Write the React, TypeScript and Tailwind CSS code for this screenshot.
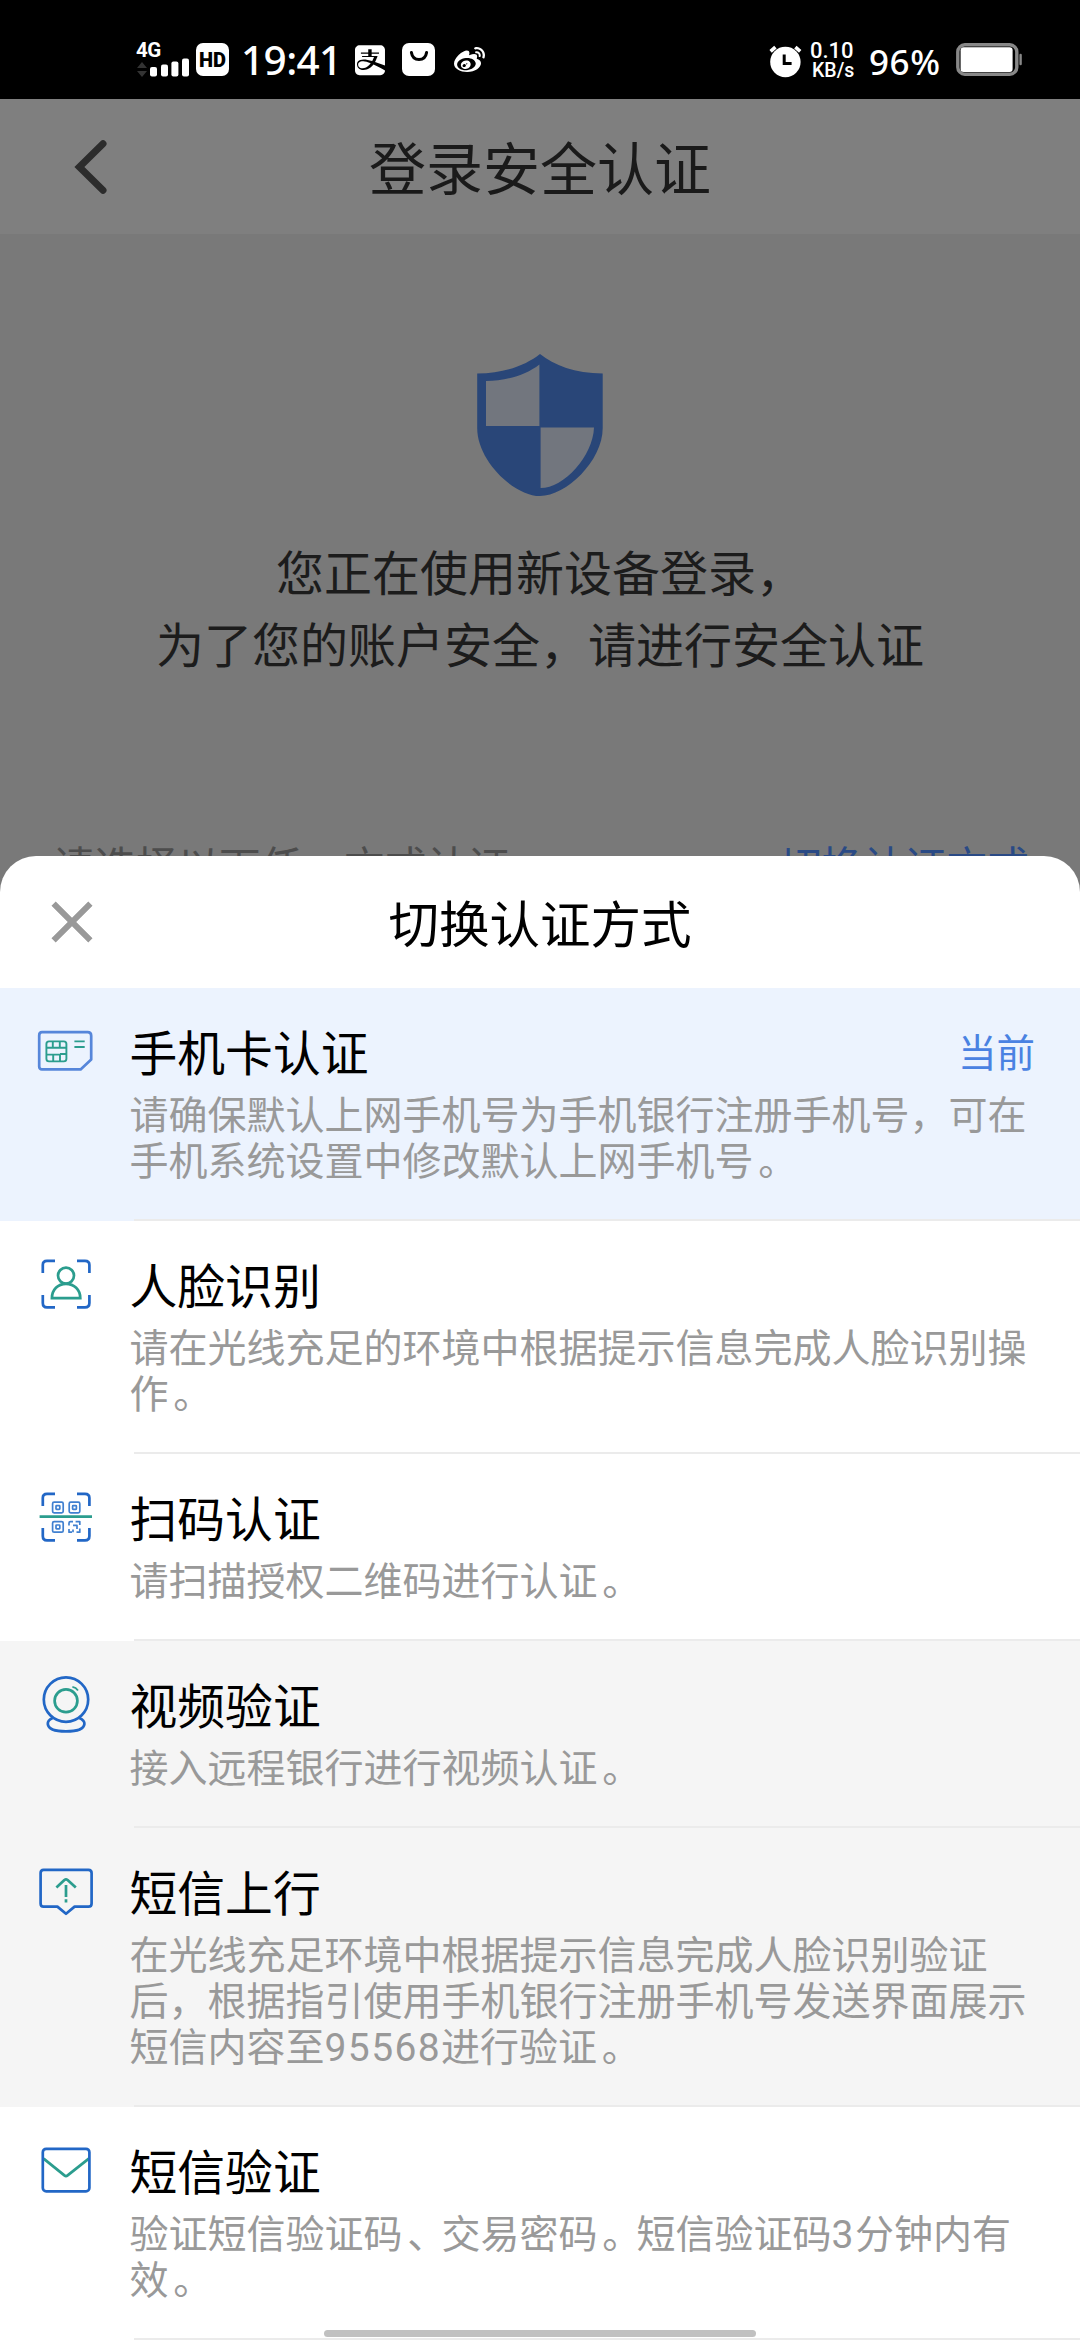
import type { ReactNode } from 'react';
import { FaAlipay, FaWeibo } from 'react-icons/fa';

const BLUE = '#2267c6';
const GREEN = '#2b9d8e';

function Icon({ children }: { children: ReactNode }) {
  return (
    <svg width="60" height="60" viewBox="0 0 60 60" fill="none" strokeWidth="2.7" strokeLinejoin="round" className="shrink-0">
      {children}
    </svg>
  );
}

const SimIcon = () => (
  <Icon>
    <path d="M6 10.2H51.6Q55.2 10.2 55.2 13.8V37.6L44.6 47.4H6Q3.2 47.4 3.2 44.4V13.4Q3.2 10.2 6 10.2Z" stroke="#5686da" />
    <g stroke={GREEN} strokeWidth="1.9">
      <rect x="10.4" y="19.4" width="20" height="20" rx="2.6" />
      <path d="M10.4 25.8H30.4M10.4 32.6H24V39.4M16.8 19.4V25.8M23.8 19.4V25.8M17.2 32.6V39.4M24 32H30.4" />
      <path d="M38.4 19.4H48.7M38.4 25H48.7" />
    </g>
  </Icon>
);

const corners = 'M6.8 18V10Q6.8 5.8 11 5.8H19M41 5.8H49Q53.4 5.8 53.4 10V18M53.4 40V48Q53.4 52.4 49 52.4H41M19 52.4H11Q6.8 52.4 6.8 48V40';

const FaceIcon = () => (
  <Icon>
    <path d={corners} stroke={BLUE} />
    <g stroke={GREEN}>
      <circle cx="30" cy="20.6" r="8" />
      <path d="M15.9 43.2H44.3C44.3 34.5 38 28.8 30 28.8S15.9 34.5 15.9 43.2Z" strokeLinejoin="miter" />
    </g>
  </Icon>
);

const QrIcon = () => (
  <Icon>
    <path d={corners} stroke={BLUE} />
    <g stroke="#4080d0" strokeWidth="1.7">
      <rect x="16.6" y="14.2" width="10.6" height="10.6" rx="1.5" />
      <rect x="20" y="17.6" width="3.8" height="3.8" rx="0.6" />
      <rect x="33.2" y="14.2" width="10.6" height="10.6" rx="1.5" />
      <rect x="36.6" y="17.6" width="3.8" height="3.8" rx="0.6" />
      <rect x="16.6" y="33.6" width="10.6" height="10.6" rx="1.5" />
      <rect x="20" y="37" width="3.8" height="3.8" rx="0.6" />
      <path d="M37 33.6H34.4Q33 33.6 33 35V37.6M39.6 33.6H43.8V37M33 41V44.2H36M37 37.4H41V41M40.5 44.2H43.8V40.4M37 41.4V44.2" />
    </g>
    <path d="M3.6 28.7H56" stroke={GREEN} strokeWidth="2.8" />
  </Icon>
);

const WebcamIcon = () => (
  <Icon>
    <circle cx="30" cy="24.6" r="22.2" stroke={BLUE} />
    <circle cx="30" cy="25.8" r="11.4" stroke={GREEN} />
    <path d="M36.4 11.8Q40 12.4 42 15.4" stroke={GREEN} strokeWidth="1.8" />
    <path d="M16.6 43C13 44.6 11.6 46.6 11.8 49C12.4 54.2 20 56.4 30 56.4S47.8 54.2 48.4 49C48.6 46.6 47 44.6 43.4 43" stroke={BLUE} />
  </Icon>
);

const UplinkIcon = () => (
  <Icon>
    <path d="M7.6 7.8H52.4Q55.6 7.8 55.6 11V41.4Q55.6 44.6 52.4 44.6H38.6L30 51.8L21.4 44.6H7.6Q4.6 44.6 4.6 41.4V11Q4.6 7.8 7.6 7.8Z" stroke={BLUE} />
    <path d="M20.4 25.6L28.4 18Q30 16.8 31.6 18L39.8 25.6M30 23V35M30 37.2V40.6" stroke={GREEN} />
  </Icon>
);

const MailIcon = () => (
  <Icon>
    <path d="M7.6 17.6L28.4 34.4Q30 35.6 31.6 34.4L52.8 17.6" stroke={GREEN} />
    <rect x="6.8" y="7.8" width="46.6" height="42.6" rx="3.4" stroke={BLUE} />
  </Icon>
);

interface Method {
  icon: ReactNode;
  title: string;
  lines: string[];
  bg: string;
  tag?: string;
}

const methods: Method[] = [
  {
    icon: <SimIcon />,
    title: '手机卡认证',
    lines: ['请确保默认上网手机号为手机银行注册手机号，可在', '手机系统设置中修改默认上网手机号。'],
    bg: 'bg-[#ecf3fe]',
    tag: '当前',
  },
  {
    icon: <FaceIcon />,
    title: '人脸识别',
    lines: ['请在光线充足的环境中根据提示信息完成人脸识别操', '作。'],
    bg: 'bg-white',
  },
  { icon: <QrIcon />, title: '扫码认证', lines: ['请扫描授权二维码进行认证。'], bg: 'bg-white' },
  { icon: <WebcamIcon />, title: '视频验证', lines: ['接入远程银行进行视频认证。'], bg: 'bg-[#f5f5f5]' },
  {
    icon: <UplinkIcon />,
    title: '短信上行',
    lines: ['在光线充足环境中根据提示信息完成人脸识别验证', '后，根据指引使用手机银行注册手机号发送界面展示', '短信内容至95568进行验证。'],
    bg: 'bg-[#f5f5f5]',
  },
  {
    icon: <MailIcon />,
    title: '短信验证',
    lines: ['验证短信验证码、交易密码。短信验证码3分钟内有', '效。'],
    bg: 'bg-white',
  },
];

/** Sets digits slightly wider and nudges full-width stops toward the middle of their cell. */
function Line({ text }: { text: string }) {
  return (
    <p className="whitespace-nowrap">
      {text.split(/(\d+|[。、])/).map((part, i) =>
        /^\d/.test(part) ? (
          <span key={i} className="tracking-[1.4px]">{part}</span>
        ) : /^[。、]$/.test(part) ? (
          <span key={i} className="inline-block translate-x-[0.12em]">{part}</span>
        ) : (
          part
        ),
      )}
    </p>
  );
}

function MethodRow({ icon, title, lines, bg, tag }: Method) {
  return (
    <li className={`flex flex-col ${bg}`}>
      <div className="flex pt-[34px] pr-[45px] pb-[34px] pl-9">
        {icon}
        <div className="ml-[33.5px] flex-1">
          <div className="flex h-[60px] items-center justify-between pt-[5px]">
            <h2 className="text-[47.8px] leading-[60px] text-black">{title}</h2>
            {tag && <span className="pb-0.5 text-[38.5px] leading-[58px] text-[#4a82e2]">{tag}</span>}
          </div>
          <div className="mt-[11px] text-[39px] leading-[46px] text-[#999999]">
            {lines.map((l) => (
              <Line key={l} text={l} />
            ))}
          </div>
        </div>
      </div>
      <div className="ml-[134px] h-0.5 bg-[#ebebeb]" />
    </li>
  );
}

function StatusBar() {
  return (
    <div className="flex h-[99px] items-start bg-black pt-[41px] pl-[136px] font-['Noto_Sans'] text-white">
      <div className="flex h-[36px] w-[54px] flex-col">
        <span className="h-[17px] font-[Roboto] text-[20.5px] leading-[18px] font-bold tracking-[-0.5px]">4G</span>
        <svg width="54" height="19" viewBox="0 0 54 19">
          <path d="M1 10L6 4L11 10ZM1 13L6 19L11 13Z" fill="#333" />
          <g fill="#fff">
            <rect x="14" y="9" width="7" height="9.4" rx="2" />
            <rect x="25" y="6.6" width="7" height="11.8" rx="2" />
            <rect x="35.4" y="3.4" width="7" height="15" rx="2" />
            <rect x="46" y="0.4" width="7" height="18" rx="2" />
          </g>
        </svg>
      </div>
      <div className="mt-0.5 ml-1.5 flex h-[33px] w-[33px] items-center justify-center rounded-[7px] bg-white font-[Roboto] text-[20px] leading-none font-black text-black">
        HD
      </div>
      <span className="ml-[12px] w-[103px] text-[40.5px] leading-[37px] font-medium tracking-[-0.6px]">19:41</span>
      <FaAlipay className="mt-[2px] ml-[11px] h-[34.3px] w-[30px]" />
      <svg className="mt-0.5 ml-[17px]" width="33" height="33" viewBox="0 0 33 33">
        <rect width="33" height="33" rx="7" fill="#fff" />
        <path d="M9.4 9.4Q10.5 16.4 17 16.4T24.6 9.4" fill="none" stroke="#000" strokeWidth="3" strokeLinecap="round" />
      </svg>
      <FaWeibo className="mt-1 ml-[19px] h-[31px] w-[31px]" />
      <svg className="mt-1 ml-[284px]" width="33" height="33" viewBox="0 0 33 33">
        <circle cx="16.4" cy="17" r="15.2" fill="#fff" />
        <path d="M1.6 6.4L6.4 2.2M31.2 6.4L26.4 2.2" stroke="#fff" strokeWidth="3.6" />
        <path d="M15.2 9.4V18.6H22.6" fill="none" stroke="#000" strokeWidth="3" />
      </svg>
      <div className="ml-2 flex w-[50px] flex-col font-[Roboto] text-[22px] leading-[20px] font-medium">
        <span>0.10</span>
        <span className="pl-0.5 text-[19.5px]">KB/s</span>
      </div>
      <span className="mt-[1px] ml-[9px] w-[76px] text-[35px] leading-[40px] font-medium tracking-[0.6px]">96%</span>
      <svg className="mt-0.5 ml-[11px]" width="68" height="33" viewBox="0 0 68 33">
        <rect x="1.8" y="1.8" width="59" height="29.4" rx="7" fill="none" stroke="#888" strokeWidth="3.4" />
        <rect x="4.6" y="4.2" width="52" height="24.8" rx="3" fill="#fff" />
        <path d="M64.6 12V21" stroke="#888" strokeWidth="2.4" strokeLinecap="round" />
      </svg>
    </div>
  );
}

export default function App() {
  return (
    <div className="relative flex h-[2340px] w-[1080px] flex-col overflow-hidden bg-[#797979] font-['Roboto','Noto_Sans_CJK_SC',sans-serif]">
      <StatusBar />
      <header className="flex h-[135px] items-center bg-[#7f7f7f]">
        <svg className="ml-[72px]" width="40" height="60" viewBox="0 0 40 60" fill="none">
          <path d="M31 6.8L7.4 30L31 53.2" stroke="#2c2c2c" strokeWidth="7" strokeLinecap="round" />
        </svg>
        <h1 className="mr-28 flex-1 pt-[8px] text-center text-[57px] leading-[80px] text-[#1a1a1a]">登录安全认证</h1>
      </header>

      <section className="flex h-[658px] shrink-0 flex-col items-center overflow-hidden pt-[119px]">
        <svg width="128" height="144" viewBox="0 0 128 144" className="shrink-0">
          <path d="M64 1C78 12 99 20.5 126.7 20.5V75C126.7 108 90 143 64 143S1.2 108 1.2 75V20.5C29 20.5 50 12 64 1Z" fill="#294678" />
          <path d="M63.4 11.5V73H10V28C30 28 50 22 63.4 11.5ZM64.6 74.4H118C117 103 88 135 64.6 135Z" fill="#72767e" />
        </svg>
        <p className="mt-[42px] text-center text-[48px] leading-[72px] whitespace-nowrap text-[#1c1c1c]">
          您正在使用新设备登录，
          <br />
          为了您的账户安全，请进行安全认证
        </p>
        <div className="mt-[155px] flex w-full justify-between pr-[51px] pl-[53px] text-[41.5px] leading-[60px] whitespace-nowrap">
          <span className="text-[#4d4d4d]">请选择以下任一方式认证</span>
          <span className="text-[#2a4a85]">切换认证方式</span>
        </div>
      </section>

      <main className="relative -mt-9 flex shrink-0 flex-col overflow-hidden rounded-t-[36px] bg-white">
        <div className="flex h-[132px] items-center">
          <svg className="ml-[50px]" width="44" height="44" viewBox="0 0 44 44">
            <path d="M3.6 3.6L40.4 40.4M40.4 3.6L3.6 40.4" stroke="#999" strokeWidth="6" />
          </svg>
          <h2 className="mr-[94px] flex-1 pt-[7px] text-center text-[50.5px] leading-[70px] text-black">切换认证方式</h2>
        </div>
        <ul>
          {methods.map((m) => (
            <MethodRow key={m.title} {...m} />
          ))}
        </ul>
      </main>
      <div className="absolute bottom-[3px] left-[324px] h-[7px] w-[432px] rounded-full bg-[#c0c0c0]" />
    </div>
  );
}
